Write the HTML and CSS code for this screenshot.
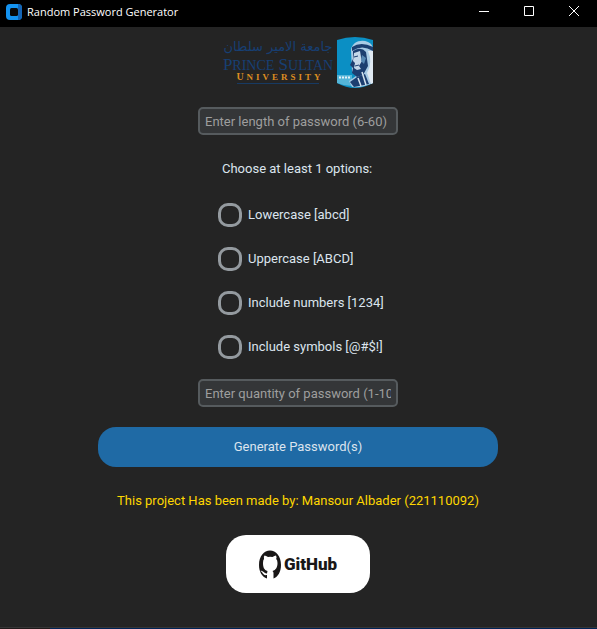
FILE: index.html
```html
<!DOCTYPE html>
<html lang="en">
<head>
<meta charset="utf-8">
<title>Random Password Generator</title>
<link rel="stylesheet" href="styles.css">
</head>
<body>
<div class="window">
  <header class="titlebar">
    <svg class="app-icon" viewBox="0 0 16 16" aria-hidden="true">
      <rect width="16" height="16" rx="4" fill="#1493f0"/>
      <path d="M12 0a4 4 0 0 1 4 4v8a4 4 0 0 1-4 4z" fill="#1565b5"/>
      <rect x="4" y="4" width="8" height="8" rx="1.5" fill="#080808"/>
    </svg>
    <h1 class="title">Random Password Generator</h1>
    <div class="controls">
      <button class="control" type="button" aria-label="Minimize"><svg viewBox="0 0 12 12"><path d="M1 6.5h10"/></svg></button>
      <button class="control" type="button" aria-label="Maximize"><svg viewBox="0 0 12 12"><path d="M1.5 1.5h9v9h-9z"/></svg></button>
      <button class="control" type="button" aria-label="Close"><svg viewBox="0 0 12 12"><path d="M1 1l10 10M11 1L1 11"/></svg></button>
    </div>
  </header>

  <form class="content">
    <svg class="logo" viewBox="0 0 152 52" role="img" aria-label="Prince Sultan University">
      <text class="logo-arabic" x="56" y="14" text-anchor="middle">جامعة الامير سلطان</text>
      <text class="logo-name" x="56" y="33" text-anchor="middle">P<tspan class="small">RINCE</tspan> S<tspan class="small">ULTAN</tspan></text>
      <text class="logo-kind" x="58" y="43" text-anchor="middle">U<tspan class="tiny">NIVERSITY</tspan></text>
      <path d="M15 46.500h82" stroke="#173a63"/>
      <g transform="translate(1 0)">
        <path d="M114 3Q132-3 150 3V46Q132 56 114 46z" fill="#0b8fc4"/>
        <path d="M114 38h15v11q-8 0-15-3z" fill="#54b5d8"/>
        <path d="M128 13C129 5 138 2 145 5Q150 7 150 13V46Q140 51 129 50L126 44 133 39 129 34z" fill="#a9cbe5"/>
        <path d="M129 10Q138 4 150 10V14Q139 7 129 14z" fill="#1c3e70"/>
        <path d="M130 14Q138 9 143 15L145 29 140 38 134 40 129 36 130 31 127 28 130 22z" fill="#1c3e70"/>
        <path d="M131 16l6-2 1 6 1 4-3 5 2 3-4 1-3-2 1-5-2-2z" fill="#c5d8e9"/>
        <path d="M131 20l4-1M132 29l4-1" stroke="#1c3e70"/>
        <path d="M139 18l4 3-2 6-3-3z" fill="#5687b3"/>
        <path d="M145 14Q150 25 144 36L148 47 150 46V14z" fill="#e0eaf3"/>
        <path d="M127 45l7-5 8-3 4 10-15 3z" fill="#1c3e70"/>
        <path d="M139 35l4 13M135 41l3 8" stroke="#d6e4ef" stroke-width="1.500"/>
        <path d="M116 40.500h11" stroke="#e5f3fa" stroke-width="2" stroke-dasharray="2 1"/>
      </g>
    </svg>

    <input class="entry" type="text" aria-label="Length of password" placeholder="Enter length of password (6-60)">

    <fieldset class="options">
      <legend class="legend">Choose at least 1 options:</legend>
      <label class="option"><input class="check" type="checkbox">Lowercase [abcd]</label>
      <label class="option"><input class="check" type="checkbox">Uppercase [ABCD]</label>
      <label class="option"><input class="check" type="checkbox">Include numbers [1234]</label>
      <label class="option"><input class="check" type="checkbox">Include symbols [@#$!]</label>
    </fieldset>

    <input class="entry" type="text" aria-label="Quantity of password" placeholder="Enter quantity of password (1-100)">
    <button class="generate" type="button">Generate Password(s)</button>
    <p class="credit">This project Has been made by: Mansour Albader (221110092)</p>
    <button class="github" type="button">
      <svg class="mark" viewBox="0 0 22 29" aria-hidden="true">
        <path fill="#191717" d="M8 28.500V25C4 26 4 22 1.500 21 4 20 5 24 8 23.500L8.500 21C5 20 4 17 4 13Q4 10 5 9 4.500 6 5.500 5.500 7 5.500 9 7 11 6.500 13.500 7 15.500 5.500 17 5.500 18 7 17.200 9 18.500 10 18.500 13C18.500 17 17 20 13.500 21Q14.500 22 14.500 23V28.500C19 27 22 21.500 22 15 22 6 17 .5 11 .5S0 6 0 15C0 21.500 3 27 8 28.500z"/>
      </svg>
      <span>GitHub</span>
    </button>
  </form>
  <footer class="edge"></footer>
</div>
</body>
</html>
```
FILE: styles.css
```css
* { box-sizing: border-box; }

body {
  margin: 0;
  background: #242424;
  color: #dce4ee;
  font: 13px/16px Roboto, sans-serif;
}

button, input { font: inherit; }

.window {
  display: flex;
  flex-direction: column;
  min-height: 100vh;
}

.titlebar {
  display: flex;
  align-items: center;
  height: 27px;
  padding: 0 1px 0 6px;
  background: #000;
  color: #fff;
}

.app-icon { width: 16px; height: 16px; margin-bottom: 4px; }

.title {
  flex: 1;
  margin: 0 0 4px 5px;
  font: 11px/16px "Open Sans", sans-serif;
}

.controls { display: flex; }

.control {
  display: flex;
  align-items: center;
  justify-content: center;
  width: 45px;
  height: 22px;
  margin-bottom: 5px;
  padding: 0;
  border: 0;
  background: none;
}

.control svg {
  width: 12px;
  height: 12px;
  fill: none;
  stroke: #fff;
}

.content {
  flex: 1;
  display: flex;
  flex-direction: column;
  align-items: center;
  padding: 10px 1px 34px 0;
}

.logo { width: 152px; height: 52px; margin-bottom: 18px; }
.logo-arabic { font: 13px "DejaVu Sans", sans-serif; fill: #173f73; }
.logo-name { font: 17px "Liberation Serif", serif; fill: #173f73; }
.logo-name .small { font-size: 14px; }
.logo-kind { font: bold 10px "Liberation Serif", serif; letter-spacing: 3px; fill: #dc8d22; }
.logo-kind .tiny { font-size: 9px; }

.entry {
  width: 200px;
  height: 28px;
  padding: 0 5px;
  border: 2px solid #565b5e;
  border-radius: 5px;
  background: #343638;
  color: #dce4ee;
}

.entry::placeholder { color: #9e9e9e; opacity: 1; }

.options {
  display: flex;
  flex-direction: column;
  gap: 20px;
  width: 160px;
  min-width: 0;
  margin: 0;
  padding: 26px 0 20px;
  border: 0;
}

.legend {
  padding: 26px 0 0 4px;
  white-space: nowrap;
}

.option {
  display: flex;
  align-items: center;
  gap: 6px;
  height: 24px;
  white-space: nowrap;
}

.check {
  appearance: none;
  flex: none;
  width: 24px;
  height: 24px;
  margin: 0;
  border: 3px solid #949a9f;
  border-radius: 10px;
}

.check:checked { background: #1f6aa5; border-color: #1f6aa5; }

.generate {
  width: 67%;
  height: 40px;
  margin-top: 20px;
  border: 0;
  border-radius: 18px;
  background: #1f6aa5;
  color: #dce4ee;
}

.credit { margin: 26px 0; color: #ffd700; }

.github {
  display: flex;
  align-items: center;
  justify-content: center;
  gap: 3px;
  width: 144px;
  height: 58px;
  padding: 0;
  border: 0;
  border-radius: 20px;
  background: #fff;
  color: #191717;
  font: 900 17px/24px Roboto, sans-serif;
}

.mark { width: 22px; height: 29px; }

.edge {
  height: 2px;
  border-top: 1px solid #363636;
  background: linear-gradient(90deg, #211a1b 50px, #002357 50px);
}
```
